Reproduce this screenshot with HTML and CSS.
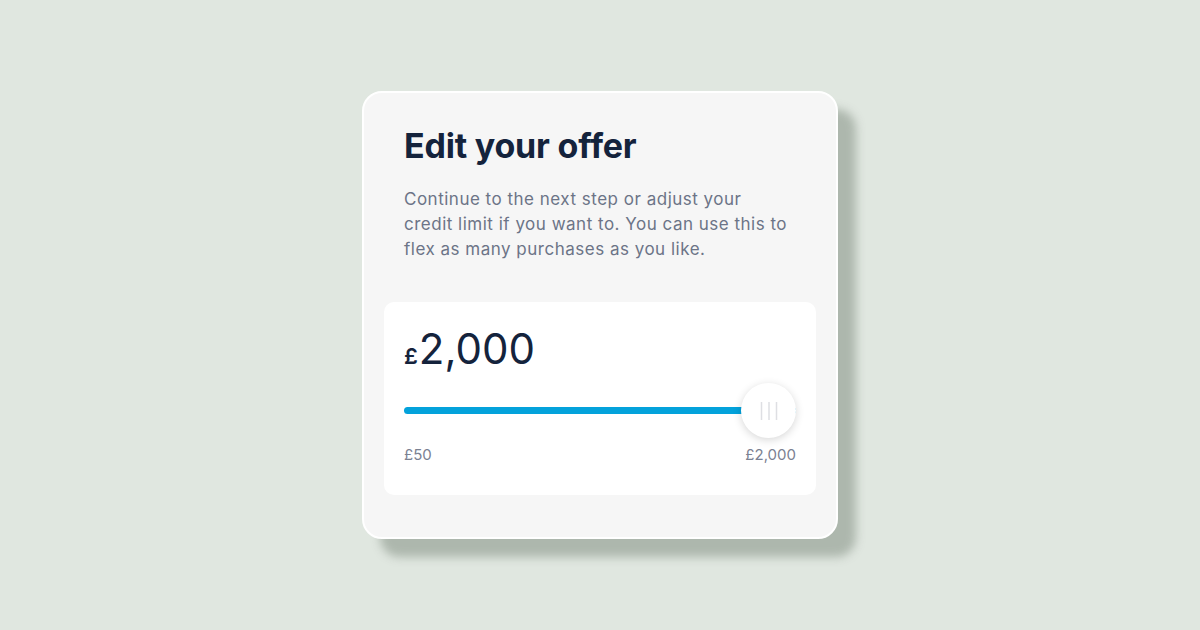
FILE: index.html
```html
<!DOCTYPE html>
<html lang="en">
<head>
<meta charset="utf-8">
<title>Edit your offer</title>
<link rel="stylesheet" href="styles.css">
</head>
<body>
<main class="stage">
  <section class="card">
    <h1 class="title">Edit your offer</h1>
    <p class="desc">Continue to the next step or adjust your credit limit if you want to. You can use this to flex as many purchases as you like.</p>
    <div class="panel">
      <div class="amount"><span class="currency">£</span><span class="value">2,000</span></div>
      <div class="slider">
        <div class="track"></div>
        <div class="thumb">
          <svg width="20" height="20" viewBox="0 0 20 20" aria-hidden="true">
            <path d="M2.5 1v18M10 1v18M17.5 1v18" stroke="#dedfe3" stroke-width="1.5" fill="none"/>
          </svg>
        </div>
      </div>
      <div class="range"><span>£50</span><span>£2,000</span></div>
    </div>
  </section>
</main>
</body>
</html>
```
FILE: styles.css
```css
* { box-sizing: border-box; }
html, body { margin: 0; padding: 0; }
body {
  width: 1200px;
  height: 630px;
  background: #e0e7e0;
  font-family: Inter, "Noto Sans", sans-serif;
  overflow: hidden;
}
.stage {
  width: 1200px;
  height: 630px;
  display: flex;
  align-items: center;
  justify-content: center;
}
.card {
  width: 476px;
  height: 448px;
  background: #f6f6f6;
  border: 2px solid #ffffff;
  border-radius: 20px;
  box-shadow: 18px 18px 10px rgba(160, 171, 160, 0.8);
  padding: 32px 20px 0 20px;
}
.title {
  margin: 0 0 0 20px;
  font-size: 34px;
  line-height: 42px;
  font-weight: 700;
  color: #14233c;
  letter-spacing: -0.2px;
}
.desc {
  margin: 20px 0 0 20px;
  width: 386px;
  font-size: 17px;
  line-height: 25px;
  color: #6c7487;
  letter-spacing: 0.5px;
}
.panel {
  margin-top: 40px;
  background: #ffffff;
  border-radius: 10px;
  padding: 22px 20px 30px 20px;
  height: 193px;
}
.amount {
  display: flex;
  align-items: baseline;
  color: #14233c;
  line-height: 50px;
}
.currency {
  font-size: 22px;
  font-weight: 600;
  margin-right: 1px;
}
.value {
  font-size: 42px;
  font-weight: 400;
}
.slider {
  position: relative;
  height: 54px;
  margin-top: 2px;
  display: flex;
  align-items: center;
}
.track {
  width: 100%;
  height: 7px;
  background: #03a2db;
  border-radius: 4px;
}
.thumb {
  position: absolute;
  right: 0;
  top: 0;
  width: 55px;
  height: 55px;
  border-radius: 50%;
  background: #ffffff;
  box-shadow: 0 2px 8px rgba(0, 0, 0, 0.16);
  display: flex;
  align-items: center;
  justify-content: center;
}
.range {
  display: flex;
  justify-content: space-between;
  margin-top: 8px;
  font-size: 15px;
  line-height: 20px;
  color: #7b8192;
}
```
